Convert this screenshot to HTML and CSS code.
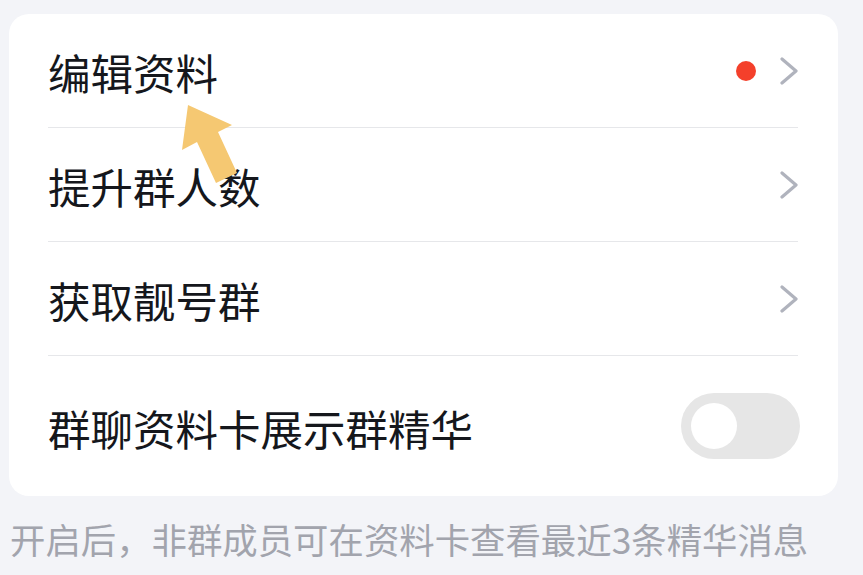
FILE: index.html
```html
<!DOCTYPE html>
<html lang="zh-CN">
<head>
  <meta charset="UTF-8" />
  <meta name="viewport" content="width=device-width, initial-scale=1.0" />
  <title>群设置</title>
  <link rel="stylesheet" href="styles.css">
</head>
<body>
  <div class="page">
    <div class="card">
      <div class="row">
        <span class="label">编辑资料</span>
        <span class="extra">
          <span class="dot"></span>
          <svg class="chevron" viewBox="0 0 18 28"><path d="M2 2 L16 14 L2 26" /></svg>
        </span>
      </div>
      <div class="row">
        <span class="label">提升群人数</span>
        <span class="extra">
          <svg class="chevron" viewBox="0 0 18 28"><path d="M2 2 L16 14 L2 26" /></svg>
        </span>
      </div>
      <div class="row">
        <span class="label">获取靓号群</span>
        <span class="extra">
          <svg class="chevron" viewBox="0 0 18 28"><path d="M2 2 L16 14 L2 26" /></svg>
        </span>
      </div>
      <div class="row row-last">
        <span class="label">群聊资料卡展示群精华</span>
        <span class="toggle"><span class="knob"></span></span>
      </div>
    </div>
    <p class="hint">开启后，非群成员可在资料卡查看最近3条精华消息</p>

    <!-- pointer overlay -->
    <svg class="pointer" viewBox="0 0 70 90">
      <path d="M8 0 L2 45 L17 37 L36 78 L57 68 L38 27 L52 20 Z" />
    </svg>
  </div>
</body>
</html>
```

FILE: styles.css
```css
/* Base */
body {
  margin: 0;
  background: #f3f4f8;
  font-family: "Noto Sans CJK SC", "Noto Sans", sans-serif;
  color: #15171c;
}

.page {
  position: relative;
  width: 863px;
  height: 575px;
  overflow: hidden;
  padding-top: 14px;
  box-sizing: border-box;
}

/* Settings card */
.card {
  margin-left: 9px;
  width: 829px;
  background: #ffffff;
  border-radius: 20px;
}

.row {
  display: flex;
  align-items: center;
  justify-content: space-between;
  height: 113px;
  margin: 0 40px 0 39px;
  border-bottom: 1px solid #e6e7ea;
}

.row-last {
  height: 140px;
  border-bottom: none;
  margin-right: 38px;
}

.label {
  font-size: 42.5px;
  line-height: 1;
  margin-top: 4px;
}

.extra {
  display: flex;
  align-items: center;
  gap: 24px;
}

.dot {
  width: 20px;
  height: 20px;
  border-radius: 50%;
  background: #f4402b;
}

.chevron {
  width: 18px;
  height: 28px;
  fill: none;
  stroke: #b0b3bd;
  stroke-width: 3.2;
  stroke-linecap: round;
  stroke-linejoin: round;
}

/* Toggle switch (off) */
.toggle {
  display: flex;
  align-items: center;
  width: 119px;
  height: 66px;
  border-radius: 33px;
  background: #e6e6e6;
  box-sizing: border-box;
  padding-left: 10px;
}

.knob {
  width: 46px;
  height: 46px;
  border-radius: 50%;
  background: #ffffff;
}

/* Footer hint */
.hint {
  margin: 25px 0 0 10px;
  font-size: 35.4px;
  line-height: 1;
  color: #a2a4ad;
  white-space: nowrap;
}

/* Arrow pointing at the first row */
.pointer {
  position: absolute;
  left: 180px;
  top: 105px;
  width: 70px;
  height: 90px;
  fill: #f5c872;
}
```
